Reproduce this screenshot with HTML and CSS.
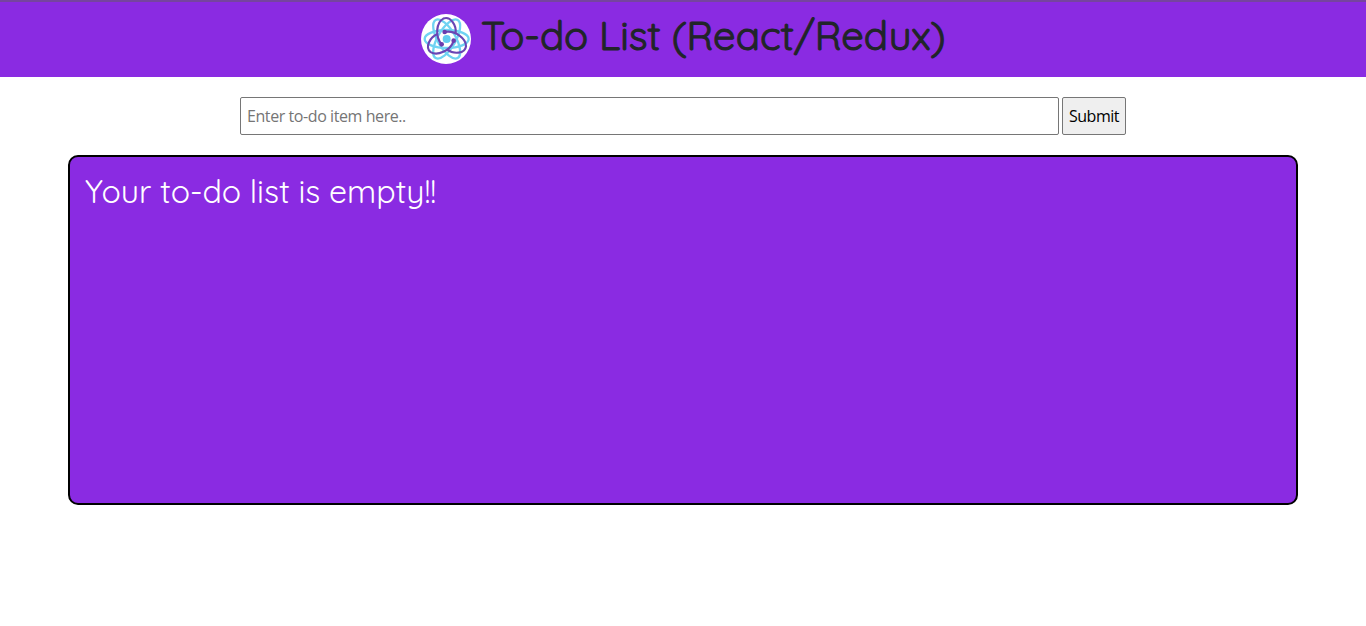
FILE: index.html
```html
<!DOCTYPE html>
<html lang="en">
<head>
<meta charset="utf-8">
<title>To-do List</title>
<link rel="stylesheet" href="styles.css">
</head>
<body>
<header class="header">
  <svg class="logo" viewBox="15 18 150 150" aria-hidden="true">
    <circle cx="90" cy="93" r="75" fill="#fff"/>
    <g fill="none" stroke="#70d3f2" stroke-width="7">
      <ellipse cx="92" cy="93" rx="66" ry="27"/>
      <ellipse cx="92" cy="93" rx="66" ry="27" transform="rotate(60 92 93)"/>
      <ellipse cx="92" cy="93" rx="66" ry="27" transform="rotate(120 92 93)"/>
    </g>
    <circle cx="92" cy="93" r="12" fill="#62cdf0"/>
    <g fill="none" stroke="#6a45b4" stroke-width="6.5" stroke-linecap="round">
      <path id="loop" d="M86 72C118 66 151 92 150 115C147 138 112 139 94 125"/>
      <use href="#loop" transform="rotate(120 92 93)"/>
      <use href="#loop" transform="rotate(240 92 93)"/>
    </g>
    <g fill="#6a3cae">
      <circle cx="86" cy="72" r="7"/>
      <circle cx="113" cy="98" r="7"/>
      <circle cx="77" cy="109" r="7"/>
    </g>
  </svg>
  <h1 class="title">To-do List (React/Redux)</h1>
</header>
<form class="entry">
  <input class="field" type="text" placeholder="Enter to-do item here..">
  <button class="submit" type="button">Submit</button>
</form>
<main class="list"><p class="empty">Your to-do list is empty!!</p></main>
</body>
</html>
```
FILE: styles.css
```css
* { box-sizing: border-box; }
body { margin: 0; background: #fff; }
.header {
  height: 77px;
  padding: 12px 0 0 421px;
  display: flex;
  align-items: flex-start;
  background: #8a2be2;
  border-top: 2px solid #76449f;
}
.logo { width: 50px; height: 50px; flex: none; }
.title {
  margin: -3px 0 0 10px;
  font: 400 40px/48px Quicksand, Lato, sans-serif;
  letter-spacing: -0.08px;
  color: #212529;
  -webkit-text-stroke: 1.1px #212529;
  white-space: nowrap;
}
.entry {
  display: flex;
  gap: 3px;
  margin: 20px 0 0 240px;
}
.field, .submit {
  height: 38px;
  border: 1px solid #767676;
  border-radius: 2px;
  font: 16px "Segoe UI", "Open Sans", sans-serif;
}
.field { width: 819px; padding: 1px 6px; letter-spacing: -0.42px; }
.field::placeholder { color: #757575; }
.submit {
  width: 64px;
  padding: 0;
  background: #efefef;
  color: #000;
  letter-spacing: -0.45px;
}
.list {
  height: 350px;
  margin: 20px 68px 0;
  padding: 14px 15px;
  background: #8a2be2;
  border: 2px solid #000;
  border-radius: 10px;
}
.empty {
  margin: 0;
  font: 400 32px/40px Quicksand, Lato, sans-serif;
  letter-spacing: -0.03px;
  color: #fff;
  white-space: nowrap;
}
```
